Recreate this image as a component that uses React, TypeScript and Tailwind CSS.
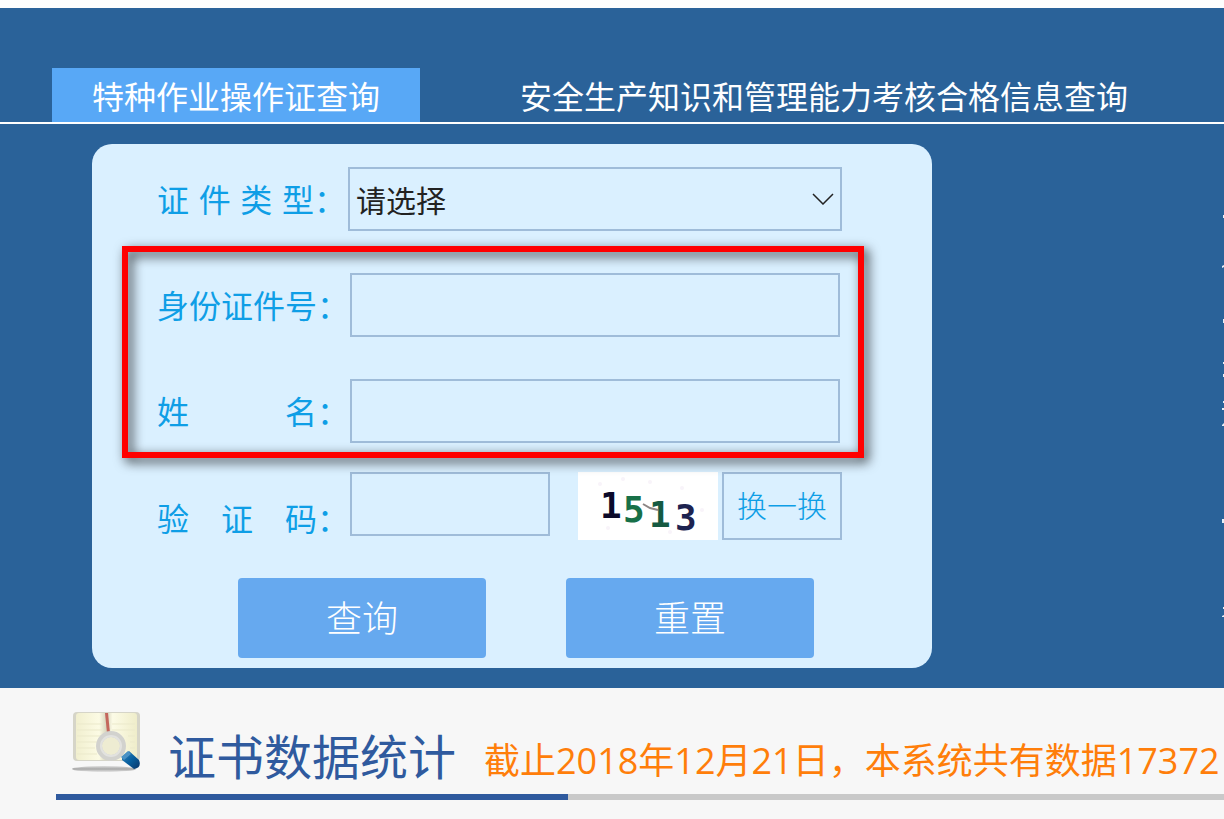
import React, { useState } from "react";

const TABS = ["特种作业操作证查询", "安全生产知识和管理能力考核合格信息查询"];

interface FieldLabelProps {
  htmlFor: string;
  text: string;
  narrow?: boolean;
}

// The characters are spread over a fixed width so all the colons line up
const FieldLabel: React.FC<FieldLabelProps> = ({ htmlFor, text, narrow }) => (
  <label
    htmlFor={htmlFor}
    className={`flex shrink-0 pb-0.5 whitespace-nowrap text-[32px] leading-10 text-[#0e9ee6] ${
      narrow ? "w-[191px]" : "w-[193px]"
    }`}
  >
    <span
      className={`[text-align-last:justify] ${narrow ? "w-[157px]" : "w-40"}`}
    >
      {text}
    </span>
    <span>：</span>
  </label>
);

const Captcha: React.FC = () => (
  <svg
    role="img"
    aria-label="验证码图片"
    viewBox="0 0 140 68"
    className="h-[68px] w-[140px] shrink-0 bg-white"
    fontFamily="'DejaVu Sans Mono', monospace"
    fontWeight="700"
    fontSize="36"
  >
    <g fill="#f8f4fa">
      <circle cx="22" cy="12" r="2" />
      <circle cx="45" cy="7" r="2" />
      <circle cx="72" cy="10" r="2" />
      <circle cx="104" cy="16" r="2" />
      <circle cx="30" cy="56" r="2" />
      <circle cx="124" cy="38" r="2" />
      <circle cx="92" cy="60" r="2" />
    </g>
    <text x="22" y="46" fill="#0b0a2a">1</text>
    <text x="45" y="50" fill="#177048">5</text>
    <text x="71" y="55" fill="#155a42">1</text>
    <text x="97" y="58" fill="#1d2350">3</text>
    <path d="M65 32l7 4 8 2" stroke="#8d8585" strokeWidth="2" fill="none" />
  </svg>
);

const BookIcon: React.FC = () => (
  <svg viewBox="0 0 70 64" className="mt-1 h-16 w-[70px] shrink-0" aria-hidden="true">
    <defs>
      <linearGradient id="page" x1="0" x2="1">
        <stop offset="0" stopColor="#f1efcf" />
        <stop offset="0.38" stopColor="#fcfbe4" />
        <stop offset="0.5" stopColor="#d6d4bd" />
        <stop offset="0.6" stopColor="#fcfbe6" />
        <stop offset="1" stopColor="#efedca" />
      </linearGradient>
      <linearGradient id="handle" x1="0" x2="1" y1="0" y2="1">
        <stop offset="0" stopColor="#3a86bd" />
        <stop offset="0.5" stopColor="#08609f" />
        <stop offset="1" stopColor="#0a3468" />
      </linearGradient>
      <linearGradient id="shade" x1="0" x2="0" y1="0" y2="1">
        <stop offset="0" stopColor="#dcdcdc" />
        <stop offset="0.5" stopColor="#a8a8a8" />
        <stop offset="1" stopColor="#e6e6e6" />
      </linearGradient>
    </defs>
    <ellipse cx="32" cy="58" rx="32" ry="3" fill="url(#shade)" />
    <rect x="1" y="1" width="67" height="49" rx="4" fill="#d6d5c8" />
    <rect x="4" y="2" width="61" height="47" rx="3" fill="url(#page)" />
    <path
      d="M5 13h25M5 19h25M5 25h25M5 31h20M5 37h18M5 43h20M40 13h23M40 19h23M56 25h7M58 31h5M58 37h5"
      stroke="#ebe9cb"
      strokeWidth="1"
    />
    <path d="M33 2h3l2 20h-3z" fill="#c4665c" />
    <circle cx="39" cy="35" r="12" fill="#eeecd2" stroke="#d2d2ce" strokeWidth="6" />
    <circle cx="39" cy="35" r="10" fill="none" stroke="#e2e2df" strokeWidth="2" />
    <path
      d="M50 46l7-6 10 9q3 8-5 9l-12-9z"
      fill="url(#handle)"
    />
    <path d="M49 46l7-6 3 3-7 6z" fill="#4a92c4" />
  </svg>
);

// Left edge of the notice column, which runs out of the window
const NoticeEdge: React.FC = () => (
  <svg
    viewBox="0 0 2 410"
    className="absolute right-0 top-[202px] h-[410px] w-0.5"
    aria-hidden="true"
  >
    <path
      d="M1 5h1v3h-1zM0 56l2-1v2l-2 1zM1 109h1v4h-1zM1 152h1v2h-1zM1 164h1v3h-1zM1 191h1v2h-1zM0 198h2v2h-2zM0 215l2-2v3h-2zM0 309h2v4h-2zM1 397h1v2h-1zM0 406l2-1v2h-2z"
      fill="#e6eef6"
    />
  </svg>
);

const inputClass = "h-16 border-2 border-[#9fbcd9] bg-transparent px-2 outline-none";

export default function App() {
  const [tab, setTab] = useState(0);

  return (
    <div className="min-h-screen overflow-hidden bg-[#f7f7f7] font-['Noto_Sans_CJK_SC',sans-serif]">
      <main className="relative border-t-8 border-[#fdfdfd] bg-[#2a6299] pt-15 pb-5">
        <nav className="flex gap-15 border-b-2 border-white pl-13">
          {TABS.map((name, i) => (
            <button
              key={name}
              type="button"
              onClick={() => setTab(i)}
              className={`h-[54px] shrink-0 px-10 text-[32px] leading-none whitespace-nowrap text-white ${
                tab === i ? "bg-[#58a8f6]" : ""
              }`}
            >
              {name}
            </button>
          ))}
        </nav>

        <form
          onSubmit={(e) => e.preventDefault()}
          className="mt-5 ml-23 w-[840px] rounded-[20px] bg-[#daf0ff] pt-0.5 pb-2.5"
        >
          <div className="flex h-[106px] items-center pl-[65px]">
            <FieldLabel htmlFor="cert-type" text="证件类型" narrow />
            <div className="relative w-[494px]">
              <select
                id="cert-type"
                className="h-16 w-full appearance-none border-2 border-[#9fbcd9] bg-transparent px-1.5 text-[30px] text-[#222] outline-none"
              >
                <option>请选择</option>
              </select>
              <svg
                viewBox="0 0 22 12"
                className="pointer-events-none absolute top-[26px] right-2 h-3 w-[22px]"
                aria-hidden="true"
              >
                <path d="M1 1l10 10L21 1" fill="none" stroke="#222" strokeWidth="1.5" />
              </svg>
            </div>
          </div>

          <div className="relative">
            <div className="flex h-[106px] items-center pl-[65px]">
              <FieldLabel htmlFor="id-number" text="身份证件号" />
              <input id="id-number" type="text" className={`${inputClass} w-[490px]`} />
            </div>
            <div className="flex h-[106px] items-center pl-[65px]">
              <FieldLabel htmlFor="full-name" text="姓名" />
              <input id="full-name" type="text" className={`${inputClass} w-[490px]`} />
            </div>
            <div className="pointer-events-none absolute -top-1.5 left-[30px] h-[212px] w-[742px] border-6 border-[#ff0000] drop-shadow-[4px_4px_6px_rgba(0,0,0,0.8)]" />
          </div>

          <div className="flex h-[114px] items-start pt-2 pl-[65px]">
            <div className="pt-[25px]">
              <FieldLabel htmlFor="captcha" text="验证码" />
            </div>
            <input id="captcha" type="text" className={`${inputClass} mr-7 w-[200px]`} />
            <Captcha />
            <button
              type="button"
              className="ml-1 h-[68px] w-[120px] border-2 border-[#9fbcd9] pb-1 text-[30px] font-light text-[#0e9ee6]"
            >
              换一换
            </button>
          </div>

          <div className="flex gap-20 pl-[146px]">
            <button
              type="submit"
              className="h-20 w-[248px] rounded-sm bg-[#66a9ef] pb-1 text-4xl font-light text-white"
            >
              查询
            </button>
            <button
              type="reset"
              className="h-20 w-[248px] rounded-sm bg-[#66a9ef] pb-1 text-4xl font-light text-white"
            >
              重置
            </button>
          </div>
        </form>

        <NoticeEdge />
      </main>

      <section className="pl-14">
        <div className="flex h-[106px] items-center pl-4 whitespace-nowrap">
          <BookIcon />
          <h2 className="ml-[26px] pt-[26px] text-5xl leading-[72px] text-[#2f5a9e]">
            证书数据统计
          </h2>
          <p className="ml-7 pt-10 font-['Open_Sans','Noto_Sans_CJK_SC',sans-serif] text-4xl leading-[54px] text-[#ff7e0a]">
            截止2018年12月21日，本系统共有数据17372
          </p>
        </div>
        <div className="h-1.5 bg-[#c9c9c9]">
          <div className="h-full w-lg bg-[#2f5a9e]" />
        </div>
      </section>
    </div>
  );
}
